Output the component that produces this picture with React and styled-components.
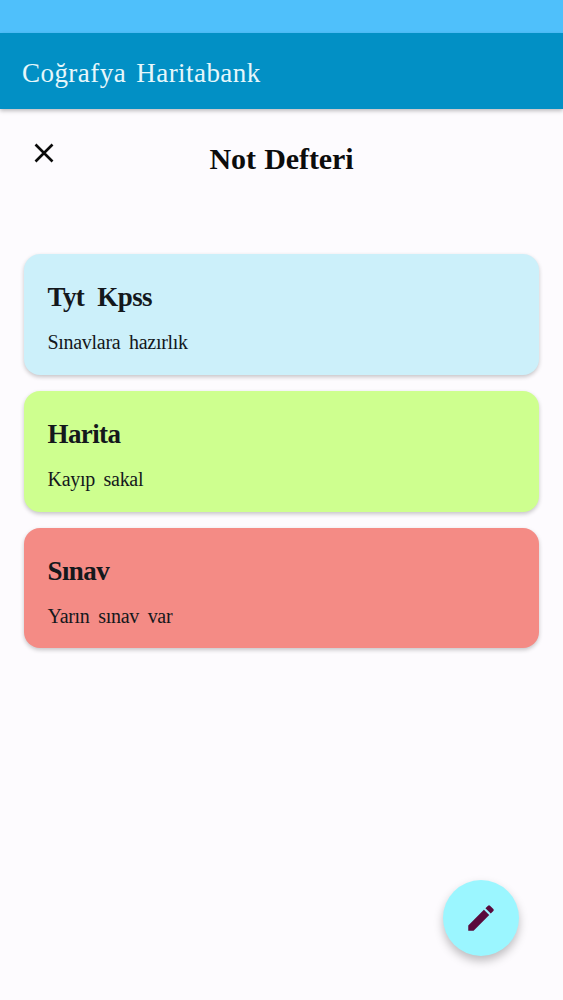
import React from "react";
import styled, { createGlobalStyle } from "styled-components";

const Global = createGlobalStyle`
  html, body { margin: 0; padding: 0; background: #fdfbfe; }
  * { box-sizing: border-box; }
`;
const Page = styled.div`
  position: relative;
  width: 563px;
  height: 1000px;
  overflow: hidden;
  background: #fdfbfe;
  font-family: "Liberation Serif", serif;
  color: #111;
`;
const StatusBar = styled.div`
  height: 33px;
  background: #4fc0fb;
`;
const AppBar = styled.header`
  height: 76px;
  background: #0290c5;
  box-shadow: 0 2px 4px rgba(0, 0, 0, 0.25);
  display: flex;
  align-items: center;
  padding: 4px 22px 0;
  color: #e6f7fb;
  font-size: 27px;
  letter-spacing: 0.45px;
  word-spacing: 3px;
`;
const TitleRow = styled.div`
  position: relative;
  height: 100px;
  display: flex;
  justify-content: center;
  padding-top: 32px;
`;
const CloseButton = styled.button`
  position: absolute;
  left: 29px;
  top: 29px;
  width: 30px;
  height: 30px;
  padding: 0;
  border: 0;
  background: none;
  display: flex;
  align-items: center;
  justify-content: center;
`;
const PageTitle = styled.h1`
  margin: 0;
  font-size: 30px;
  line-height: 36px;
  font-weight: 700;
  letter-spacing: -0.1px;
  word-spacing: 1px;
  color: #0c0c0c;
`;
const NoteList = styled.div`
  display: flex;
  flex-direction: column;
  gap: 16px;
  padding: 45px 24px 0;
`;
const NoteCard = styled.article`
  height: ${(p) => p.$h}px;
  border-radius: 16px;
  background: ${(p) => p.$bg};
  box-shadow: 0 2px 4px rgba(0, 0, 0, 0.22);
  padding: 26px 23.5px 0;
  color: #14181c;
`;
const NoteTitle = styled.h2`
  margin: 0;
  font-size: 27px;
  line-height: 34px;
  font-weight: 700;
  letter-spacing: -0.6px;
  word-spacing: 7px;
`;
const NoteText = styled.p`
  margin: 16px 0 0;
  font-size: 20px;
  line-height: 24px;
  letter-spacing: -0.3px;
  word-spacing: 4px;
`;
const Fab = styled.button`
  position: absolute;
  left: 443px;
  top: 880px;
  width: 76px;
  height: 76px;
  padding: 0;
  border: 0;
  border-radius: 50%;
  background: #9bf6ff;
  box-shadow: 0 5px 10px rgba(0, 0, 0, 0.25);
  display: flex;
  align-items: center;
  justify-content: center;
`;

const notes = [
  { title: "Tyt Kpss", text: "Sınavlara hazırlık", bg: "#ccf0fa", h: 121 },
  { title: "Harita", text: "Kayıp sakal", bg: "#ceff8f", h: 121 },
  { title: "Sınav", text: "Yarın sınav var", bg: "#f48b85", h: 120 },
];

export default function App() {
  return (
    <Page>
      <Global />
      <StatusBar />
      <AppBar>Coğrafya Haritabank</AppBar>
      <TitleRow>
        <CloseButton aria-label="Kapat">
          <svg width="30" height="30" viewBox="0 0 30 30">
            <path d="M6.5 6.5 L23.5 23.5 M23.5 6.5 L6.5 23.5" stroke="#0a0a0a" strokeWidth="2.6" fill="none" />
          </svg>
        </CloseButton>
        <PageTitle>Not Defteri</PageTitle>
      </TitleRow>
      <NoteList>
        {notes.map((n) => (
          <NoteCard key={n.title} $bg={n.bg} $h={n.h}>
            <NoteTitle>{n.title}</NoteTitle>
            <NoteText>{n.text}</NoteText>
          </NoteCard>
        ))}
      </NoteList>
      <Fab aria-label="Yeni not">
        <svg width="34" height="34" viewBox="0 0 24 24" fill="#5a0a3c">
          <path d="M3 17.25V21h3.75L17.81 9.94l-3.75-3.75L3 17.25zM20.71 7.04a1 1 0 0 0 0-1.41l-2.34-2.34a1 1 0 0 0-1.41 0l-1.83 1.83 3.75 3.75 1.83-1.83z" />
        </svg>
      </Fab>
    </Page>
  );
}
